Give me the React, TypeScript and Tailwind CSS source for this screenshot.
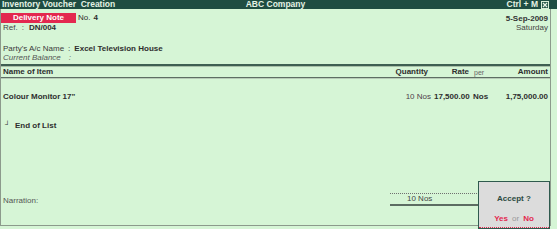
import React from 'react';

const FONT = { fontFamily: '"Liberation Sans", Arial, sans-serif' };

function CloseBox() {
  return (
    <svg width="8" height="8" viewBox="0 0 8 8" className="block">
      <rect x="0.5" y="0.5" width="7" height="7" fill="#2a5a4c" stroke="#d8ecd8" strokeWidth="1" />
      <path d="M2 2 L6 6 M6 2 L2 6" stroke="#e8f4e8" strokeWidth="1.2" />
    </svg>
  );
}

export default function App() {
  return (
    <div
      className="relative w-[557px] h-[229px] overflow-hidden bg-[#d6f5d6] text-[8px] leading-none text-[#2e2e2e]"
      style={FONT}
    >
      {/* Title bar */}
      <div className="h-[9px] grid grid-cols-3 items-center bg-[#1f4d42] bg-[radial-gradient(#4e7a68_0.6px,transparent_0.7px)] bg-[size:2px_2px] text-[8.5px] font-bold text-[#e4f2e4] pl-[2px] pr-[8px]">
        <span className="whitespace-pre">Inventory Voucher  Creation</span>
        <span className="text-center">ABC Company</span>
        <span className="flex items-center justify-end gap-[3px]">
          <span>Ctrl + M</span>
          <CloseBox />
        </span>
      </div>

      {/* Main frame */}
      <div className="w-[551px] h-[217px] border-l border-r border-b border-[#8c9a8c] flex flex-col">
        <div className="h-[4px]" />

        <div className="h-[10px] flex items-center pr-[2px]">
          <div className="w-[75px] h-[10px] bg-[#e3284f] flex items-center justify-center text-white font-bold">
            Delivery Note
          </div>
          <span className="ml-[2px]">No.</span>
          <span className="ml-[3px] font-bold">4</span>
          <span className="ml-auto mt-[2px] font-bold text-[#333]">5-Sep-2009</span>
        </div>

        <div className="h-[9px] flex items-center pl-[2px] pr-[2px]">
          <span className="text-[#444]">Ref.</span>
          <span className="ml-[4px] text-[#444]">:</span>
          <span className="ml-[5px] font-bold">DN/004</span>
          <span className="ml-auto text-[#444] mt-[1px]">Saturday</span>
        </div>

        <div className="h-[12px]" />

        <div className="h-[9px] flex items-center pl-[2px]">
          <span className="text-[#3a3a3a]">Party's A/c Name</span>
          <span className="ml-[4px]">:</span>
          <span className="ml-[4px] font-bold">Excel Television House</span>
        </div>

        <div className="h-[9px] flex items-center pl-[2px] italic text-[#555]">
          <span>Current Balance</span>
          <span className="ml-[8px]">:</span>
        </div>

        <div className="h-[2px]" />
        <div className="h-[2px] bg-[#3f5f52]" />
        <div className="h-[1px] bg-[#a8c0a8]" />

        {/* Column header */}
        <div className="h-[10px] flex items-center font-bold pl-[2px] pr-[2px]">
          <span className="flex-1">Name of Item</span>
          <span className="w-[40px] text-right pr-[6px]">Quantity</span>
          <span className="w-[37px] text-right pr-[2px]">Rate</span>
          <span className="w-[27px] pl-[3px] font-normal text-[7px] text-[#666]">per</span>
          <span className="w-[50px] text-right">Amount</span>
        </div>
        <div className="h-[1px] bg-[#5e6e64]" />
        <div className="h-[1px] bg-[#b8ccb8]" />

        <div className="h-[13px]" />

        {/* Item row */}
        <div className="h-[10px] flex items-center pl-[2px] pr-[2px]">
          <span className="flex-1 font-bold">Colour Monitor 17"</span>
          <span className="w-[40px] text-right pr-[3px] text-[#4e3e4c]">10 Nos</span>
          <span className="w-[37px] text-right pr-[4px] font-bold">17,500.00</span>
          <span className="w-[27px] pl-[2px] font-bold">Nos</span>
          <span className="w-[50px] text-right font-bold">1,75,000.00</span>
        </div>

        <div className="h-[19px]" />

        <div className="h-[10px] flex items-center pl-[4px]">
          <span className="text-[7px] font-bold -mt-[3px]">┘</span>
          <span className="ml-[5px] font-bold">End of List</span>
        </div>

        <div className="h-[62px]" />

        {/* Narration and totals */}
        <div className="flex h-[14px] pl-[2px]">
          <span className="w-[387px] flex items-center text-[#555] mt-[1px]">Narration:</span>
          <div className="w-[89px] flex flex-col">
            <div className="h-[1px] border-t border-dotted border-[#707070]" />
            <div className="h-[10px] flex items-center pl-[17px] text-[#444]">10 Nos</div>
            <div className="h-[2px] bg-[#5c6c62]" />
          </div>
        </div>
      </div>

      {/* Accept dialog */}
      <div className="absolute left-[478px] top-[181px] w-[72px] h-[48px] bg-[#dcdcdc] border border-[#2f5a4e] flex flex-col items-center">
        <div className="mt-[13px] font-bold text-[#2b4a40]">Accept ?</div>
        <div className="mt-auto mb-[5px] flex items-center gap-[4px] font-bold">
          <span className="text-[#e3284f]">Yes</span>
          <span className="font-normal text-[#9a9a9a]">or</span>
          <span className="text-[#e3284f]">No</span>
        </div>
        <div className="absolute left-0 right-0 bottom-0 h-[1px] border-b border-dotted border-[#e3284f]" />
      </div>
    </div>
  );
}
